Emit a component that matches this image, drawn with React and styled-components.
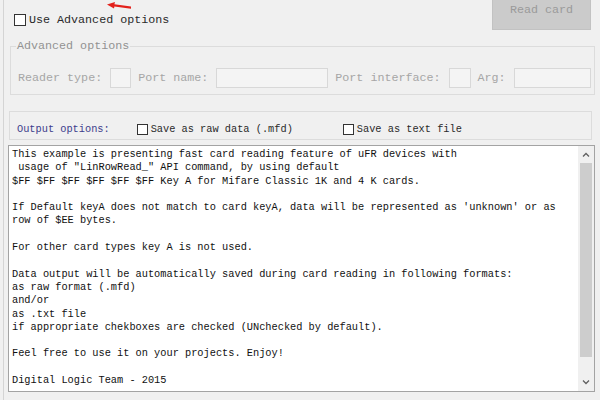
import React from 'react'
import styled, { createGlobalStyle } from 'styled-components'

const GlobalStyle = createGlobalStyle`
  html, body {
    margin: 0;
    padding: 0;
    background: #f0f0f0;
  }
  body {
    font-family: "Liberation Mono", "Courier New", monospace;
  }
`

const Window = styled.div`
  position: relative;
  display: flex;
  flex-direction: column;
  height: 400px;
  margin-left: 3px;
  border-left: 1px solid #d4d4d4;
  box-sizing: border-box;
  overflow: hidden;
`

const TopRow = styled.div`
  display: flex;
  justify-content: space-between;
  align-items: flex-start;
  height: 30px;
  padding: 0 9px 0 10px;
`

const CheckLabel = styled.label`
  display: flex;
  align-items: center;
  gap: 3px;
  margin-top: ${p => (p.$small ? '0' : '13px')};
  margin-left: ${p => p.$offset || 0}px;
  font-size: ${p => (p.$small ? '10.3px' : '11.7px')};
  line-height: 14px;
  color: #2a2a2a;
  white-space: pre;
`

const Box = styled.span`
  display: inline-block;
  width: ${p => (p.$small ? '11px' : '12px')};
  height: ${p => (p.$small ? '11px' : '12px')};
  box-sizing: border-box;
  border: 1px solid #333;
  background: #fff;
`

const ReadButton = styled.div`
  display: flex;
  justify-content: center;
  align-items: flex-start;
  width: 99px;
  height: 30px;
  padding-top: 3px;
  box-sizing: border-box;
  background: #cbcbcb;
  border: 1px solid #c2c2c2;
  border-top: none;
  color: #9a9a9a;
  font-size: 11.7px;
  line-height: 14px;
`

const Arrow = styled.svg`
  position: absolute;
  left: 103px;
  top: 2px;
`

const GroupBox = styled.fieldset`
  margin: 9px 5px 0 6px;
  padding: 0 0 6px 5px;
  border: 1px solid #dcdcdc;
  min-width: 0;
`

const Legend = styled.legend`
  padding: 0 1px;
  font-size: 11.7px;
  line-height: 14px;
  color: #929292;
`

const FieldRow = styled.div`
  display: flex;
  align-items: center;
  height: 20px;
  margin-top: 15px;
  padding-left: 2px;
`

const FieldLabel = styled.span`
  flex-shrink: 0;
  margin-right: 8px;
  font-size: 11.7px;
  color: #a6a6a6;
  white-space: pre;
`

const Field = styled.span`
  flex-shrink: 0;
  width: ${p => p.$w}px;
  height: 20px;
  margin-right: 7px;
  box-sizing: border-box;
  background: #f4f4f4;
  border: 1px solid #d8d8d8;

  &:last-child {
    margin-right: 0;
  }
`

const OutputBox = styled.div`
  display: flex;
  align-items: center;
  height: 14px;
  margin: 16px 8px 0 5px;
  padding: 10px 0 3px 7px;
  border: 1px solid #dcdcdc;
`

const OutputLabel = styled.span`
  margin-right: 27px;
  font-size: 10.3px;
  color: #3d3d8c;
  white-space: pre;
`

const TextBox = styled.div`
  display: flex;
  height: 247px;
  margin: 5px 5px 0 4px;
  box-sizing: border-box;
  background: #fff;
  border: 1px solid #a3a3a3;
`

const TextContent = styled.div`
  flex: 1;
  padding: 2px 0 0 3px;
  font-size: 10.3px;
  line-height: 13.3px;
  color: #111;
  white-space: pre;
  overflow: hidden;
`

const ScrollBar = styled.div`
  display: flex;
  flex-direction: column;
  width: 16px;
  background: #f0f0f0;
`

const ScrollArrow = styled.div`
  display: flex;
  justify-content: center;
  align-items: center;
  height: 17px;
`

const Thumb = styled.div`
  height: 194px;
  margin: 0 2px;
  background: #cdcdcd;
`

const Track = styled.div`
  flex: 1;
`

const text = `This example is presenting fast card reading feature of uFR devices with
 usage of "LinRowRead_" API command, by using default
$FF $FF $FF $FF $FF $FF Key A for Mifare Classic 1K and 4 K cards.

If Default keyA does not match to card keyA, data will be represented as 'unknown' or as
row of $EE bytes.

For other card types key A is not used.

Data output will be automatically saved during card reading in following formats:
as raw format (.mfd)
and/or
as .txt file
if appropriate chekboxes are checked (UNchecked by default).

Feel free to use it on your projects. Enjoy!

Digital Logic Team - 2015`

const Chevron = ({ up }) => (
  <svg width="8" height="5" viewBox="0 0 8 5">
    <polyline
      points={up ? '1,4.5 4,1.5 7,4.5' : '1,0.5 4,3.5 7,0.5'}
      fill="none"
      stroke="#606060"
      strokeWidth="1.3"
    />
  </svg>
)

const App = () => {
  return (
    <Window>
      <GlobalStyle />
      <Arrow width="25" height="8" viewBox="0 0 25 8">
        <polygon
          points="0,2.6 8,0 7.4,2.3 24,4.6 24,6.8 7.4,4.4 7,6.6"
          fill="#e3211b"
        />
      </Arrow>
      <TopRow>
        <CheckLabel>
          <Box />
          Use Advanced options
        </CheckLabel>
        <ReadButton>Read card</ReadButton>
      </TopRow>

      <GroupBox>
        <Legend>Advanced options</Legend>
        <FieldRow>
          <FieldLabel>Reader type:</FieldLabel>
          <Field $w={21} />
          <FieldLabel>Port name:</FieldLabel>
          <Field $w={112} />
          <FieldLabel>Port interface:</FieldLabel>
          <Field $w={22} />
          <FieldLabel>Arg:</FieldLabel>
          <Field $w={77} />
        </FieldRow>
      </GroupBox>

      <OutputBox>
        <OutputLabel>Output options:</OutputLabel>
        <CheckLabel $small>
          <Box $small />
          Save as raw data (.mfd)
        </CheckLabel>
        <CheckLabel $small $offset={50}>
          <Box $small />
          Save as text file
        </CheckLabel>
      </OutputBox>

      <TextBox>
        <TextContent>{text}</TextContent>
        <ScrollBar>
          <ScrollArrow>
            <Chevron up />
          </ScrollArrow>
          <Thumb />
          <Track />
          <ScrollArrow>
            <Chevron />
          </ScrollArrow>
        </ScrollBar>
      </TextBox>
    </Window>
  )
}

export default App
